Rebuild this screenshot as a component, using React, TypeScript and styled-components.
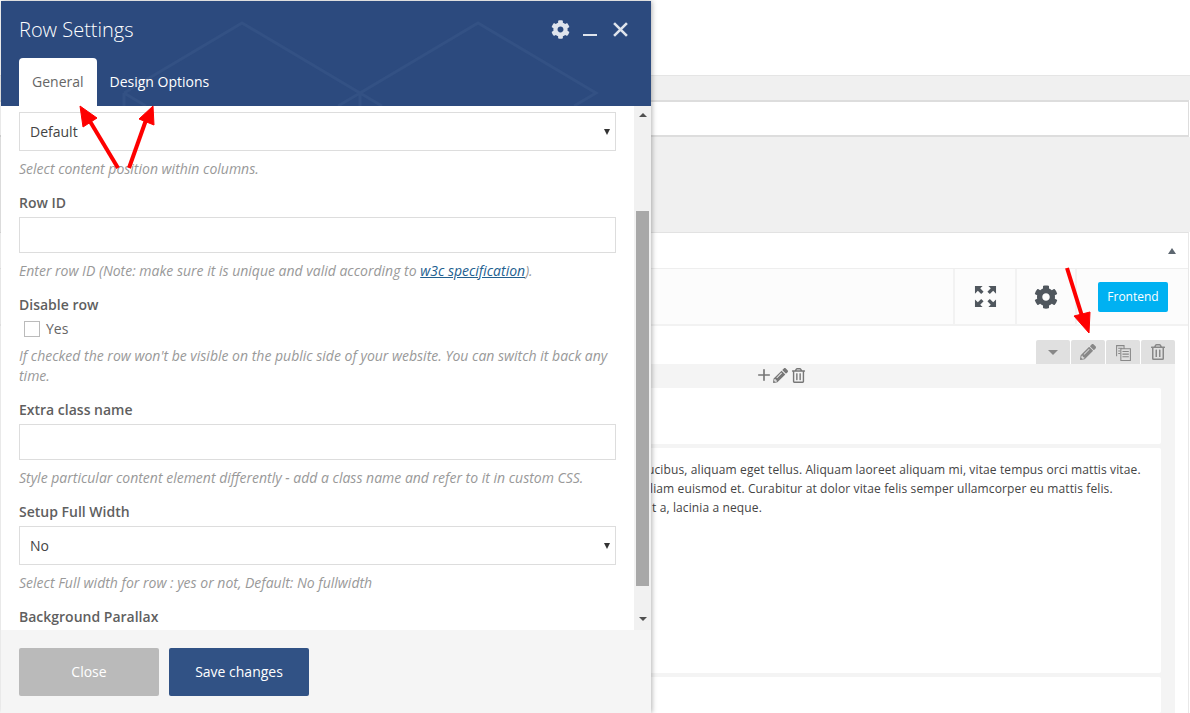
import React from 'react'
import styled, { createGlobalStyle } from 'styled-components'
import { FaCog, FaPencilAlt, FaRegTrashAlt } from 'react-icons/fa'
import { Plus } from 'lucide-react'

const GlobalStyle = createGlobalStyle`
  html, body { margin: 0; padding: 0; background: #fff; }
  body { font-family: "Open Sans", "Liberation Sans", sans-serif; color: #444; }
  * { box-sizing: border-box; }
`

const Page = styled.div`
  position: relative;
  width: 1190px;
  height: 713px;
  overflow: hidden;
  display: flex;
  flex-direction: column;
  background: #fff;
`

const TopBar = styled.div`
  height: 76px;
  flex: none;
  background: #fff;
  border-bottom: 1px solid #e5e5e5;
`

const GreyBand = styled.div<{ $height: number }>`
  height: ${p => p.$height}px;
  flex: none;
  background: #f0f0f0;
`

const TitleField = styled.div`
  height: 37px;
  flex: none;
  margin-right: 1px;
  background: #fff;
  border: 1px solid #ddd;
  border-width: 2px 1px 2px 0;
`

const Metabox = styled.div`
  flex: 1;
  display: flex;
  flex-direction: column;
  margin-right: 1px;
  background: #fff;
  border-top: 1px solid #e2e2e2;
  border-right: 1px solid #e8e8e8;
`

const MetaHeader = styled.div`
  height: 36px;
  flex: none;
  display: flex;
  align-items: center;
  justify-content: flex-end;
  padding-right: 12px;
  border-bottom: 1px solid #eee;
`

const Caret = styled.span`
  width: 0;
  height: 0;
  border-left: 4.5px solid transparent;
  border-right: 4.5px solid transparent;
  border-bottom: 6px solid #5d6770;
`

const Toolbar = styled.div`
  height: 57px;
  flex: none;
  display: flex;
  justify-content: flex-end;
  background: #fcfcfc;
  border-bottom: 2px solid #f2f2f2;
`

const ToolCell = styled.div<{ $width: number }>`
  width: ${p => p.$width}px;
  display: flex;
  align-items: center;
  justify-content: center;
  border-left: 2px solid #f2f2f2;
  color: #50575e;
`

const FrontendButton = styled.button`
  width: 70px;
  height: 30px;
  margin: auto 20px auto 20px;
  padding: 0;
  border: none;
  border-radius: 2px;
  background: #00b1f2;
  color: #fff;
  font: 500 12px "Open Sans", sans-serif;
`

const Canvas = styled.div`
  flex: 1;
  display: flex;
  flex-direction: column;
  padding: 14px 13px 0 20px;
`

const RowControls = styled.div`
  display: flex;
  justify-content: flex-end;
  gap: 1px;
  height: 24px;
  flex: none;
`

const RowControl = styled.div`
  width: 34px;
  display: flex;
  align-items: center;
  justify-content: center;
  background: #e0e0e0;
  border-radius: 2px 2px 0 0;
  color: #888;
`

const DownCaret = styled.span`
  width: 0;
  height: 0;
  border-left: 5px solid transparent;
  border-right: 5px solid transparent;
  border-top: 5px solid #888;
`

const RowBox = styled.div`
  flex: 1;
  display: flex;
  flex-direction: column;
  gap: 4px;
  padding-right: 14px;
  background: #f4f4f4;
`

const ColumnControls = styled.div`
  height: 20px;
  flex: none;
  display: flex;
  align-items: center;
  justify-content: flex-start;
  padding: 2px 0 0 735px;
  color: #777;
`

const ColumnTrash = styled(FaRegTrashAlt)`
  margin-left: 3px;
`

const Card = styled.div<{ $height?: number }>`
  height: ${p => (p.$height ? `${p.$height}px` : 'auto')};
  flex: ${p => (p.$height ? 'none' : 1)};
  padding: 12px 0 0 627px;
  background: #fff;
  border-radius: 2px;
  font-size: 12px;
  line-height: 19px;
  letter-spacing: 0.12px;
  color: #444;
`

const TextLine = styled.div<{ $indent: number }>`
  margin-left: ${p => p.$indent}px;
  white-space: nowrap;
`

/* modal */

const Modal = styled.div`
  position: absolute;
  top: 1px;
  left: 1px;
  width: 650px;
  height: 712px;
  display: flex;
  flex-direction: column;
  background: #fff;
  box-shadow: 1px 0 5px rgba(0, 0, 0, 0.3);
`

const ModalHeader = styled.div`
  position: relative;
  height: 105px;
  flex: none;
  display: flex;
  flex-direction: column;
  justify-content: space-between;
  padding: 0 18px;
  overflow: hidden;
  background: #2c4a7e;
`

const HeaderPattern = styled.svg`
  position: absolute;
  top: -1px;
  left: -1px;
`

const TitleRow = styled.div`
  position: relative;
  height: 56px;
  display: flex;
  align-items: center;
  justify-content: space-between;
`

const ModalTitle = styled.h2`
  margin: 0;
  color: #fff;
  font-size: 20px;
  font-weight: 300;
`

const HeaderIcons = styled.div`
  display: flex;
  align-items: center;
  gap: 13px;
  color: #dfe4ec;
  margin-right: 5px;
`

const MinimizeBar = styled.span`
  width: 14px;
  height: 2px;
  margin: 11px 3px 0 0;
  background: #dfe4ec;
`

const TabRow = styled.div`
  position: relative;
  display: flex;
  height: 48px;
`

const Tab = styled.div<{ $active?: boolean }>`
  height: 48px;
  display: flex;
  align-items: center;
  padding: 0 13px 2px;
  font-size: 14px;
  border-radius: 4px 4px 0 0;
  color: ${p => (p.$active ? '#666' : '#fff')};
  background: ${p => (p.$active ? '#fff' : 'transparent')};
`

const ModalMain = styled.div`
  flex: 1;
  min-height: 0;
  display: flex;
`

const FormArea = styled.div`
  flex: 1;
  min-width: 0;
  overflow: hidden;
  padding: 6px 18px 0 18px;
  font-size: 14px;
`

const Field = styled.div`
  margin-bottom: 13px;
`

const FieldLabel = styled.div`
  height: 20px;
  line-height: 22px;
  margin-bottom: 5px;
  font-size: 14px;
  font-weight: 600;
  color: #5f5f5f;
`

const SelectWrap = styled.div`
  position: relative;
  &::after {
    content: '';
    position: absolute;
    top: 17px;
    right: 6px;
    border-left: 3.5px solid transparent;
    border-right: 3.5px solid transparent;
    border-top: 6px solid #333;
    pointer-events: none;
  }
`

const SelectBox = styled.select`
  display: block;
  width: 100%;
  height: 39px;
  padding: 0 10px;
  border: 1px solid #ddd;
  border-radius: 0;
  appearance: none;
  background: #fff;
  color: #444;
  font: 14px "Open Sans", sans-serif;
`

const TextBox = styled.input`
  display: block;
  width: 100%;
  height: 36px;
  padding: 0 10px;
  border: 1px solid #ddd;
  background: #fff;
`

const Help = styled.div`
  margin-top: 8px;
  line-height: 20px;
  font-size: 14px;
  font-style: italic;
  color: #999;
  a { color: #23608f; }
`

const CheckRow = styled.label`
  display: flex;
  align-items: center;
  gap: 6px;
  height: 19px;
  padding: 0 0 1px 5px;
  color: #666;
`

const CheckBox = styled.span`
  width: 16px;
  height: 16px;
  border: 1px solid #bbb;
  background: #fff;
  margin-top: 1px;
`

const ScrollTrack = styled.div`
  width: 17px;
  flex: none;
  display: flex;
  flex-direction: column;
  align-items: center;
  background: #f1f1f1;
`

const ScrollUp = styled.span`
  margin-top: 7px;
  width: 0;
  height: 0;
  border-left: 4px solid transparent;
  border-right: 4px solid transparent;
  border-bottom: 4px solid #505050;
`

const ScrollThumb = styled.div`
  width: 13px;
  height: 375px;
  margin-top: 94px;
  background: #a8a8a8;
`

const ScrollDown = styled.span`
  margin-top: 31px;
  width: 0;
  height: 0;
  border-left: 4px solid transparent;
  border-right: 4px solid transparent;
  border-top: 4px solid #505050;
`

const ModalFooter = styled.div`
  height: 83px;
  flex: none;
  display: flex;
  gap: 10px;
  padding: 18px 18px 0;
  background: #f5f5f5;
`

const FooterButton = styled.button<{ $primary?: boolean }>`
  width: 140px;
  height: 48px;
  padding: 0 0 2px;
  border: none;
  border-radius: 2px;
  color: #fff;
  font: 14px "Open Sans", sans-serif;
  background: ${p => (p.$primary ? '#315285' : '#bababa')};
`

const ArrowLayer = styled.svg`
  position: absolute;
  top: 0;
  left: 0;
  pointer-events: none;
`

function ExpandIcon() {
  return <svg width="23" height="23" viewBox="0 0 24 24" fill="currentColor">
    <path d="M1 1h8L6.500 3.500 10 7 7.500 9.500 4 6 1 9zM23 1v8l-3-3-3.500 3.500L14 7l3.500-3.500L15 1zM1 23v-8l3 3 3.500-3.500L10 17l-3.500 3.500L9 23zM23 23h-8l2.500-2.500L14 17l2.500-2.500L20 18l3-3z" />
  </svg>
}

function CopyIcon() {
  return <svg width="17" height="17" viewBox="0 0 16 16" fill="none" stroke="currentColor" strokeWidth="1">
    <path d="M1.500 11.500v-10h7v3M5.500 4.500h9v11h-9z" fill="#e0e0e0" />
    <path d="M3 4h4M3 6.500h2M3 9h2M7 7h6M7 9.500h6M7 12h6" />
  </svg>
}

function CloseIcon() {
  return <svg width="15" height="15" viewBox="0 0 14 14" stroke="currentColor" strokeWidth="2.400">
    <path d="M1 1l12 12M13 1L1 13" />
  </svg>
}

export default function App() {
  return <Page>
    <GlobalStyle />
    <TopBar />
    <GreyBand $height={24} />
    <TitleField />
    <GreyBand $height={95} />
    <Metabox>
      <MetaHeader><Caret /></MetaHeader>
      <Toolbar>
        <ToolCell $width={62}><ExpandIcon /></ToolCell>
        <ToolCell $width={60}><FaCog size={24} /></ToolCell>
        <ToolCell $width={3} />
        <FrontendButton>Frontend</FrontendButton>
      </Toolbar>
      <Canvas>
        <RowControls>
          <RowControl><DownCaret /></RowControl>
          <RowControl><FaPencilAlt size={16} /></RowControl>
          <RowControl><CopyIcon /></RowControl>
          <RowControl><FaRegTrashAlt size={16} /></RowControl>
        </RowControls>
        <RowBox>
          <ColumnControls>
            <Plus size={18} strokeWidth={2.2} />
            <FaPencilAlt size={15} />
            <ColumnTrash size={15} />
          </ColumnControls>
          <Card $height={56} />
          <Card $height={225}>
            <TextLine $indent={0}>ucibus, aliquam eget tellus. Aliquam laoreet aliquam mi, vitae tempus orci mattis vitae.</TextLine>
            <TextLine $indent={3}>liam euismod et. Curabitur at dolor vitae felis semper ullamcorper eu mattis felis.</TextLine>
            <TextLine $indent={5}>t a, lacinia a neque.</TextLine>
          </Card>
          <Card />
        </RowBox>
      </Canvas>
    </Metabox>

    <Modal>
      <ModalHeader>
        <HeaderPattern width="650" height="106" viewBox="0 0 650 106" fill="none" stroke="#335184" strokeWidth="3">
          <path d="M124 93L242 23L360 93L478 23L596 93L574 106M124 93L146 106M360 93L338 106M360 93L382 106M360 93V106M124 93V106" />
        </HeaderPattern>
        <TitleRow>
          <ModalTitle>Row Settings</ModalTitle>
          <HeaderIcons>
            <FaCog size={19} />
            <MinimizeBar />
            <CloseIcon />
          </HeaderIcons>
        </TitleRow>
        <TabRow>
          <Tab $active>General</Tab>
          <Tab>Design Options</Tab>
        </TabRow>
      </ModalHeader>
      <ModalMain>
        <FormArea>
          <Field>
            <SelectWrap>
              <SelectBox defaultValue="Default"><option>Default</option></SelectBox>
            </SelectWrap>
            <Help>Select content position within columns.</Help>
          </Field>
          <Field>
            <FieldLabel>Row ID</FieldLabel>
            <TextBox />
            <Help>Enter row ID (Note: make sure it is unique and valid according to <a href="#w3c">w3c specification</a>).</Help>
          </Field>
          <Field>
            <FieldLabel>Disable row</FieldLabel>
            <CheckRow><CheckBox />Yes</CheckRow>
            <Help>If checked the row won't be visible on the public side of your website. You can switch it back any time.</Help>
          </Field>
          <Field>
            <FieldLabel>Extra class name</FieldLabel>
            <TextBox />
            <Help>Style particular content element differently - add a class name and refer to it in custom CSS.</Help>
          </Field>
          <Field>
            <FieldLabel>Setup Full Width</FieldLabel>
            <SelectWrap>
              <SelectBox defaultValue="No"><option>No</option></SelectBox>
            </SelectWrap>
            <Help>Select Full width for row : yes or not, Default: No fullwidth</Help>
          </Field>
          <Field>
            <FieldLabel>Background Parallax</FieldLabel>
          </Field>
        </FormArea>
        <ScrollTrack>
          <ScrollUp />
          <ScrollThumb />
          <ScrollDown />
        </ScrollTrack>
      </ModalMain>
      <ModalFooter>
        <FooterButton>Close</FooterButton>
        <FooterButton $primary>Save changes</FooterButton>
      </ModalFooter>
    </Modal>

    <ArrowLayer width="1190" height="713" viewBox="0 0 1190 713" fill="#fe0000" stroke="#fe0000">
      <path d="M118 168L88 118" strokeWidth="4" />
      <path d="M80 106L97 118L83 127z" strokeWidth="1" />
      <path d="M129 168L146 120" strokeWidth="4" />
      <path d="M153 106L154 125L139 119z" strokeWidth="1" />
      <path d="M1067 268L1082 316" strokeWidth="4" />
      <path d="M1089 333L1074 316L1090 312z" strokeWidth="1" />
    </ArrowLayer>
  </Page>
}
